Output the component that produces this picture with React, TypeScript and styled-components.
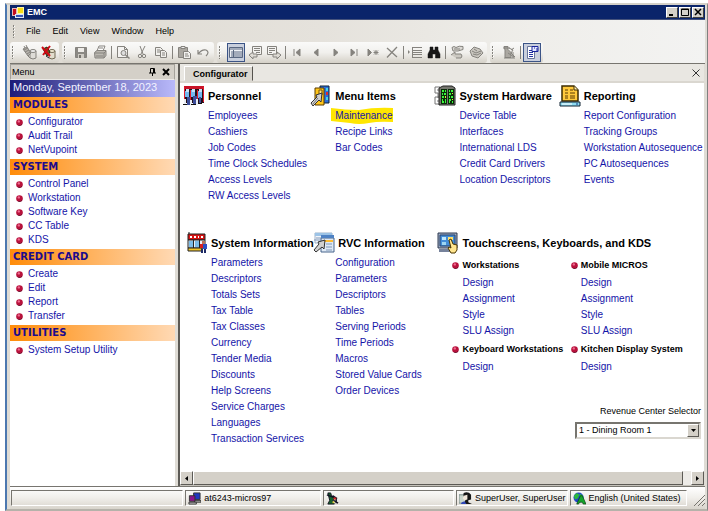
import React from "react";
import styled, { createGlobalStyle, css } from "styled-components";

const sans = `"Liberation Sans", Arial, sans-serif`;

const GlobalStyle = createGlobalStyle`
  * { box-sizing: border-box; }
  body { margin: 0; background: #fff; font-family: ${sans}; font-size: 9px; color: #000; }
  button, select { font: inherit; color: inherit; padding: 0; margin: 0; border: 0; background: none; }
  ul { list-style: none; margin: 0; padding: 0; }
  h1, h2, h3 { margin: 0; }
  svg { display: block; flex: none; }
`;

const Page = styled.div`
  height: 100vh;
  padding: 3px 0 0 5px;
  display: flex;
`;

const Window = styled.div`
  flex: 1;
  min-width: 0;
  display: flex;
  flex-direction: column;
  background: #dfdcd5;
  border-style: solid;
  border-width: 2px 1px 2px 2px;
  border-color: #d4d0c8 #808080 #b5b2aa #4c78b0;
  padding: 0 2px 0 3px;
`;

const TitleBar = styled.header`
  height: 15px;
  display: flex;
  align-items: center;
  gap: 3px;
  padding: 0 1px;
  background: #0a246a;
  border-bottom: 1px solid #46537c;
`;

const WindowTitle = styled.h1`
  flex: 1;
  font-size: 9px;
  line-height: 12px;
  color: #fff;
`;

const Caption = styled.div`
  display: flex;
  gap: 1px;
`;

const CaptionButton = styled.button`
  width: 12px;
  height: 11px;
  display: grid;
  place-items: center;
  background: #d4d0c8;
  border: 1px solid;
  border-color: #fff #404040 #404040 #fff;
`;

const MenuBar = styled.nav`
  height: 22px;
  display: flex;
  align-items: center;
  padding-left: 1px;
  background: linear-gradient(90deg, #dedad2, #e5e2dc 45%, #efeeea 75%, #f3f3f2);
`;

const MenuButton = styled.button`
  padding: 0 6px;
  line-height: 14px;
`;

const ToolBars = styled.div`
  height: 22px;
  display: flex;
  gap: 3px;
  background: linear-gradient(90deg, #dedad2, #e5e2dc 45%, #efeeea 75%, #f3f3f2);
  border-bottom: 1px solid #77756f;
`;

const Strip = styled.div`
  height: 21px;
  display: flex;
  align-items: center;
  gap: 1px;
  padding-right: 2px;
  border-radius: 3px;
  background: linear-gradient(#fafaf9, #f1f0ed 50%, #d5d1c8);
`;

const ToolButton = styled.button<{ $pressed?: boolean }>`
  width: 18px;
  height: 19px;
  display: grid;
  place-items: center;
  color: #85837e;
  ${(p) => p.$pressed && css`
    background: #c9cfdd;
    border: 1px solid #3b5486;
  `}
`;

const Divider = styled.span`
  width: 1px;
  height: 13px;
  margin: 0 1px;
  background: #85837e;
`;

const Workspace = styled.div`
  flex: 1;
  min-height: 0;
  display: grid;
  grid-template-columns: 165px minmax(0, 1fr);
  gap: 3px;
  padding-right: 1px;
`;

const SidePanel = styled.aside`
  display: flex;
  flex-direction: column;
  background: #fff;
`;

const PanelHeader = styled.div`
  height: 16px;
  display: flex;
  align-items: center;
  gap: 6px;
  padding: 0 4px 0 1px;
  background: #d4d0c8;
  border: 1px solid #a5a29b;
  border-bottom-color: #eceae6;
`;

const PanelTitle = styled.h2`
  flex: 1;
  font-size: 9px;
  font-weight: 400;
`;

const DateStrip = styled.div`
  height: 17px;
  padding-left: 3px;
  font-size: 11px;
  line-height: 14px;
  white-space: nowrap;
  color: #f2f2ff;
  background: linear-gradient(90deg, #1c1c78, #b9b9fa);
`;

const GroupTitle = styled.h3`
  height: 16px;
  padding-left: 3px;
  font: bold 10px/15px "DejaVu Sans", Verdana, sans-serif;
  color: #1c0a8c;
  background: linear-gradient(90deg, #ff8c0a, #ffd9b4);
`;

const GroupList = styled.ul`
  padding: 2px 0 2px 6px;
`;

const GroupItem = styled.li`
  height: 14px;
  display: flex;
  align-items: center;
  gap: 5px;
`;

const Link = styled.a`
  position: relative;
  font-size: 10px;
  line-height: 16px;
  white-space: nowrap;
  color: #1414a8;
  text-decoration: none;
`;

const Marker = styled.svg`
  position: absolute;
  left: -4px;
  top: -3px;
  z-index: -1;
`;

const MainPanel = styled.main`
  display: flex;
  flex-direction: column;
  border-left: 2px solid #5c5a55;
  background: #fff;
  isolation: isolate;
`;

const TabRow = styled.div`
  height: 19px;
  display: flex;
  align-items: flex-end;
  justify-content: space-between;
  padding: 0 4px;
  background: #e9e7e2;
  border-bottom: 2px solid #dad7d0;
`;

const Tab = styled.button`
  height: 15px;
  padding: 0 4px 0 8px;
  font-weight: 700;
  background: #dad7d0;
  border: 1px solid;
  border-color: #fff #55534e transparent #fff;
`;

const CloseButton = styled.button`
  height: 17px;
  display: grid;
  place-items: center;
`;

const Canvas = styled.div`
  flex: 1;
  min-height: 0;
  overflow: hidden;
  display: flex;
  flex-direction: column;
  gap: 27px;
  padding-top: 1px;
`;

const TopRow = styled.div`
  display: grid;
  grid-template-columns: 127fr 124fr 124fr 145fr;
  padding-left: 3px;
`;

const BottomRow = styled.div`
  display: grid;
  grid-template-columns: 124fr 127fr 266fr;
  padding-left: 6px;
`;

const Section = styled.section`
  min-width: 0;
`;

const SectionHead = styled.div<{ $inset?: boolean }>`
  height: 24px;
  display: grid;
  grid-template-columns: 22px 1fr;
  gap: 3px;
  align-items: center;
  padding-left: ${(p) => (p.$inset ? 3 : 0)}px;
`;

const SectionTitle = styled.h2`
  font-size: 11px;
  line-height: 22px;
  white-space: nowrap;
`;

const LinkList = styled.ul<{ $indent: number }>`
  padding-left: ${(p) => p.$indent}px;
`;

const LinkItem = styled.li`
  height: 16px;
  line-height: 16px;
  font-size: 10px;
`;

const SubGrid = styled.div`
  display: grid;
  grid-template-columns: 118fr 133fr;
  padding-left: 15px;
`;

const SubTitle = styled.h3`
  height: 20px;
  display: flex;
  align-items: center;
  gap: 3px;
  font-size: 9px;
  white-space: nowrap;
`;

const Selector = styled.label`
  display: flex;
  flex-direction: column;
  align-items: flex-end;
  gap: 4px;
  margin-top: 29px;
  padding-right: 3px;
  line-height: 14px;
`;

const SelectBox = styled.span`
  position: relative;
  width: 126px;
  height: 17px;
  border: 2px solid;
  border-color: #77756f #dad7d0 #dad7d0 #77756f;
`;

const Select = styled.select`
  appearance: none;
  display: block;
  width: 100%;
  height: 13px;
  padding-left: 2px;
  line-height: 13px;
  background: #fff;
`;

const SelectArrow = styled.span`
  position: absolute;
  top: 0;
  right: 0;
  width: 12px;
  height: 13px;
  display: grid;
  place-items: center;
  pointer-events: none;
  background: #d4d0c8;
  border: 1px solid;
  border-color: #fff #5c5a55 #5c5a55 #fff;
`;

const ScrollBar = styled.div`
  height: 15px;
  display: grid;
  grid-template-columns: 13px minmax(0, 1fr) 13px;
  background: #edebe7;
  border-bottom: 1px solid #c5c2ba;
`;

const ScrollButton = styled.button`
  display: grid;
  place-items: center;
  background: #d4d0c8;
  border: 1px solid;
  border-color: #fff #5c5a55 #5c5a55 #fff;
`;

const Thumb = styled.div`
  margin-right: 8px;
  background: #d4d0c8;
  border: 1px solid;
  border-color: #fff #5c5a55 #5c5a55 #fff;
`;

const StatusBar = styled.footer`
  height: 23px;
  display: grid;
  grid-template-columns: 173fr 136fr 132fr 112fr 118fr 16px;
  gap: 2px;
  padding: 3px 0 3px 1px;
  background: linear-gradient(#fff, #f0eeea 50%, #d8d4cc);
  border-top: 1px solid #77756f;
`;

const StatusCell = styled.div`
  min-width: 0;
  display: flex;
  align-items: center;
  gap: 3px;
  padding-left: 2px;
  white-space: nowrap;
  border: 1px solid;
  border-color: #77756f #fff #fff #77756f;
`;

const SizeGrip = styled.div`
  display: flex;
  align-items: flex-end;
  justify-content: flex-end;
`;

const Bullet = () => (
  <svg width="7" height="7" viewBox="0 0 7 7">
    <circle cx="3.5" cy="3.5" r="3.3" fill="#b8123c" />
    <path d="M1.5 5.6Q4 7.4 6.4 4.4 6 6.8 3.5 6.9 2 6.8 1.5 5.6Z" fill="#4c0420" />
    <circle cx="2.8" cy="2.4" r="1.2" fill="#f06a90" />
  </svg>
);

const Grip = () => (
  <svg width="9" height="15" viewBox="0 0 9 15" shapeRendering="crispEdges" fill="#85837e">
    <path d="M2 1h1v2H2zM2 4h1v2H2zM2 7h1v2H2zM2 10h1v2H2zM2 13h1v1H2z" />
    <path d="M3 2h1v1H3zM3 5h1v1H3zM3 8h1v1H3zM3 11h1v1H3z" fill="#fff" />
  </svg>
);

const toolShapes: Record<string, React.ReactNode> = {
  connect: (
    <>
      <path d="M8 6v7q3 2 6 0V6" fill="#dedcd7" />
      <ellipse cx="11" cy="6" rx="3" ry="1.5" fill="#eee" />
      <path d="M1 4l4-2 4 6-3 3zM3 3L2 1M5 2L4 0M6 11l2 2" fill="#b5b2ac" />
      <path d="M2 5l4-2M3 7l4-2M5 9l3-2" />
    </>
  ),
  disconnect: (
    <>
      <path d="M8 6v7q3 2 6 0V6" fill="#e2ddcd" stroke="#736b55" />
      <ellipse cx="11" cy="6" rx="3" ry="1.5" fill="#f0ead2" stroke="#736b55" />
      <path d="M2 4l4-2 3 5-3 4z" fill="#675a22" stroke="#2c2810" />
      <path d="M1 2l8 9M9 1L2 10" stroke="#cf0a16" strokeWidth="2" />
      <path d="M5 11l3 2" stroke="#223" />
    </>
  ),
  save: (
    <>
      <path d="M1.5 2.5h11v10h-11z" fill="#8b8984" />
      <path d="M4 3h6v4H4z" fill="#eeece8" stroke="none" />
      <path d="M4 9h6v4H4z" fill="#cfccc5" stroke="none" />
      <path d="M5 10h2v3H5z" fill="#77756f" stroke="none" />
    </>
  ),
  print: (
    <>
      <path d="M4 6l2-5h6l-2 5" fill="#fff" />
      <path d="M1.5 7.5L4 5.5h9v5l-2 2.5H2z" fill="#bbb8b1" />
      <path d="M2 8h9l2-2M3 11h7M11 8v5M6 3h4" />
    </>
  ),
  preview: (
    <>
      <path d="M1.5 1.5h7l3 3v8h-10z" fill="#f4f3f1" />
      <path d="M8.5 1.5v3h3" />
      <circle cx="7.5" cy="8" r="2.5" fill="#ddd" />
      <path d="M9.5 10l4 3.5" strokeWidth="1.5" />
    </>
  ),
  cut: (
    <>
      <path d="M5 1l3 8M10 1L6 9" />
      <circle cx="5" cy="11" r="1.7" />
      <circle cx="9" cy="11" r="1.7" />
    </>
  ),
  copy: (
    <>
      <path d="M1.5 2.5h5l2 2v6h-7z" fill="#f1f0ed" />
      <path d="M6.5 5.5h4l2 2v5h-6z" fill="#f1f0ed" />
      <path d="M3 5h3M3 7h3M8 8h3M8 10h3" />
    </>
  ),
  paste: (
    <>
      <path d="M1.5 2.5h9v10h-9z" fill="#aaa7a1" />
      <path d="M4 1.5h4v2H4z" fill="#eee" />
      <path d="M6.5 6.5h5l2 2v5h-7z" fill="#f1f0ed" />
      <path d="M8 9h3M8 11h4" />
    </>
  ),
  undo: <path d="M2 5v4h4M2 9q4-5 8-4 4 2 0 6" strokeWidth="1.2" />,
  details: (
    <>
      <path d="M.5 2.5h13v10H.5z" fill="#eef0f5" stroke="#596781" />
      <path d="M1 4h12M2 7h2M5 7h8M2 9h2M5 9h8M2 11h2M5 11h8M4.5 5v8" stroke="#596781" />
    </>
  ),
  prevTable: (
    <>
      <path d="M4.5 1.5h9v8h-9z" fill="#f4f3f1" />
      <path d="M6 3.5h6M6 5.5h6M8 7.5h4" />
      <path d="M1 10l4-3v2h4v3H5v2z" fill="#dedbd5" />
    </>
  ),
  nextTable: (
    <>
      <path d="M.5 1.5h9v8h-9z" fill="#f4f3f1" />
      <path d="M2 3.5h6M2 5.5h6M2 7.5h3" />
      <path d="M14 10l-4-3v2H6v3h4v2z" fill="#dedbd5" />
    </>
  ),
  first: <path d="M4 4v7M10 4v7L6 7.500z" fill="#85837e" />,
  prev: <path d="M9 4v7L5 7.500z" fill="#85837e" />,
  next: <path d="M6 4v7l4-3.500z" fill="#85837e" />,
  last: <path d="M10 4v7M4 4v7l4-3.500z" fill="#85837e" />,
  newRow: (
    <>
      <path d="M2 4v7l3.500-3.500z" fill="#85837e" />
      <path d="M10 5v5M7.500 7.500h5M8 5.500l4 4M12 5.500l-4 4" />
    </>
  ),
  remove: <path d="M2 3l10 9M12 2L2 12.500" strokeWidth="1.300" />,
  sheet: (
    <>
      <path d="M0 5v4l2-2z" fill="#85837e" stroke="none" />
      <path d="M4 2.500h10M4 5.500h10M4 7.500h10M4 9.500h10M4 12.500h10M4.500 2v11" />
    </>
  ),
  find: (
    <path
      d="M3 2h3v3h2V2h3v3l2 4v4H8.500V9h-3v4H1V9l2-4zM2.500 9v3M10 9v3"
      fill="#171717"
      stroke="#171717"
      strokeWidth=".5"
    />
  ),
  scroll: (
    <>
      <path d="M2 2.500q2-2 4 0 3-2 7-1v3L8 6H3z" fill="#dcdad5" />
      <path d="M1 10l4-3v2h6q2 2 0 4H6M4 4h6" fill="#cbc8c1" />
    </>
  ),
  refresh: (
    <>
      <path d="M1 6l4-4 6 2 3 4-5 5-6-2z" fill="#c9c6bf" />
      <path d="M3 6l4 2 5-2M5 4l3 2M4 9l4 1 4-2" />
    </>
  ),
  runner: (
    <>
      <path d="M2 1.500h4v3l3 3v5H3V5z" fill="#aaa7a1" />
      <path d="M7 3l4 2-2 3 4 4M1 3h7M6 8l6 4M11 7v6M2 13h11M9 5l3-2" />
    </>
  ),
  props: (
    <>
      <path d="M2.500 1.500h7v12h-7z" fill="#fff" stroke="#68759c" />
      <path d="M4 5.500h4M4 7.500h4M4 9.500h4M4 11.500h4" stroke="#2636a0" />
      <path d="M7 1.500h6v5H7z" fill="#e4e8ff" stroke="#18249c" />
      <path d="M9 3h1M12 3v4" stroke="#18249c" />
    </>
  ),
};

const ToolIcon = ({ name }: { name: string }) => (
  <svg width="15" height="15" viewBox="0 0 15 15" fill="none" stroke="currentColor" strokeWidth="1">
    {toolShapes[name]}
  </svg>
);

const sectionShapes: Record<string, React.ReactNode> = {
  people: (
    <>
      <path d="M1 1h20v17H1z" fill="#24101a" />
      <path d="M1 1h20v3H1z" fill="#c91428" />
      <path d="M1 2h1v16H1zM20 2h1v15h-1zM7 5h1v12H7zM14 5h1v12h-1z" fill="#e21b2c" />
      <path d="M2 6h4v6H2zM8 5h4v7H8zM15 6h4v7h-4z" fill="#74b8ef" />
      <path d="M3 4h3v3H3zM9 4h3v3H9zM16 4h3v3h-3z" fill="#c9e2f7" />
      <path d="M4 12h3v8H4zM10 11h4v8h-4zM16 12h2v7h-2z" fill="#3c4d9a" />
      <path d="M1 14h2v6H1zM7 15h2v5H7zM13 14h2v6h-2z" fill="#e9eef5" />
      <path d="M0 19h4v1H0zM8 19h5v1H8zM15 18h4v1h-4z" fill="#111" />
    </>
  ),
  menu: (
    <>
      <path d="M10 1h9v17h-9z" fill="#2b6fdc" stroke="#123" />
      <path d="M16 3h2v3h-2zM16 12h2v3h-2z" fill="#46d4e8" />
      <path d="M16 7h2v3h-2z" fill="#d63030" />
      <path d="M5 3h9v17H5z" fill="#ffc61a" stroke="#5a3b00" />
      <path d="M9 5h3v5H9z" fill="#ffe98a" stroke="#7a5200" />
      <path d="M12 8L6 10l1 2-6 6 2 3 6-6 2 2z" fill="#d0d0d0" stroke="#333" />
      <path d="M8 13l-5 6" stroke="#777" />
    </>
  ),
  hardware: (
    <>
      <path d="M1 2h5M1 2v6h3M4 8v5M1 12h4M1 12v7h5M3 5h4M3 16h4" fill="none" stroke="#777" />
      <path d="M5 3l4-2h9l3 2v17H5z" fill="#76766f" stroke="#222" />
      <path d="M7 4h6v15H7zM14 4h6v15h-6z" fill="#082b08" />
      <path
        d="M8 6h2M11 6h1M8 9h1M10 9h2M8 12h2M8 15h1M11 15h1M8 17h2M11 17h1M15 6h1M17 6h2M15 9h2M15 12h1M17 12h2M15 15h2M15 17h1M18 17h1"
        stroke="#3cf53c"
        strokeWidth="2"
      />
      <path d="M11 11h1v2h-1zM18 8h1v1h-1zM18 14h1v1h-1z" fill="#e9e334" />
    </>
  ),
  report: (
    <>
      <path d="M3 1h12l4 4v11H3z" fill="#ffc93c" stroke="#3c2b00" strokeWidth="1.5" />
      <path d="M15 1v4h4" fill="#fff0b0" stroke="#3c2b00" />
      <path d="M6 5h3M11 5h3M6 8h3M11 8h5M6 11h3M11 11h5M6 13h3M11 13h5" stroke="#5b3b00" />
      <path d="M1 17h20v4H1z" fill="#8edcf2" stroke="#123" />
      <path d="M3 19h10" stroke="#fff" />
      <path d="M17 19h2" stroke="#173a8a" />
    </>
  ),
  shop: (
    <>
      <path d="M3 0v2" stroke="#222" />
      <path d="M2 2h17v6H2z" fill="#d81414" stroke="#222" />
      <path d="M4 4h2v2H4zM8 4h2v2H8zM12 4h1v2h-1zM15 4h2v2h-2z" fill="#fff" />
      <path d="M2 8h17v8H2z" fill="#eaf3fb" stroke="#222" />
      <path d="M3 9h4v6H3zM9 9h4v6H9z" fill="#7cbce8" />
      <path d="M7 8h1v8H7zM13 8h1v8h-1z" fill="#222" />
      <path d="M2 16h14v3H2z" fill="#f2c62a" stroke="#222" />
      <path d="M16 9h3v3h-3z" fill="#b8735a" />
      <path d="M14 12h3v4h-3z" fill="#d82020" />
      <path d="M17 12h4v5h-4z" fill="#2c50c4" />
      <path d="M15 17h2v4h-2zM18 17h2v4h-2z" fill="#1d2b66" />
    </>
  ),
  form: (
    <>
      <path d="M2 1h17v10H2z" fill="#f2f5fa" stroke="#9fb2c8" />
      <path d="M2 1h17v3H2z" fill="#9cc3e6" />
      <path d="M8 6h13v14H8z" fill="#dfe9f5" stroke="#47658c" />
      <path d="M8 3h13v3H8z" fill="#4f82c4" />
      <path d="M3 6h5M1 8h7M13 12h6M13 15h6M13 18h6" stroke="#7e97b8" />
      <path d="M10 8h10v2H10z" fill="#ffbc30" />
      <path d="M12 8L5 10l1 2-5 6 2 2 6-5 2 2z" fill="#d0d0d0" stroke="#333" />
    </>
  ),
  touch: (
    <>
      <path d="M1 1h19v15H1z" fill="#9ba8bf" stroke="#2f3a52" />
      <path d="M3 3h15v11H3z" fill="#438dd8" stroke="#26456e" />
      <path d="M5 5h4v3H5z" fill="#bfe8fb" />
      <path d="M11 5h5v3h-5z" fill="#ffe069" />
      <path d="M5 10h4v3H5z" fill="#9ed6f2" />
      <path d="M2 17h14v3H2z" fill="#76829b" />
      <path d="M12 8l2-1 2 5 4 1v5l-2 3h-4l-3-5 1-1 2 1z" fill="#ffe58e" stroke="#4b3500" />
    </>
  ),
};

const SectionIcon = ({ name }: { name: string }) => (
  <svg width="22" height="22" viewBox="0 0 22 22" aria-hidden="true">
    {sectionShapes[name]}
  </svg>
);

const AppIcon = () => (
  <svg width="13" height="12" viewBox="0 0 13 12" shapeRendering="crispEdges">
    <path d="M1 2h4v7H1z" fill="#c40d20" stroke="#e4b9b9" />
    <path d="M6 1h6v6H6z" fill="#f8dc16" stroke="#fff6a6" />
    <path d="M4 8h8v3H4z" fill="#3456bc" stroke="#dbe3f5" />
  </svg>
);

const StatusIcon = ({ kind }: { kind: "server" | "runner" | "user" | "globe" }) => (
  <svg width="13" height="13" viewBox="0 0 14 14">
    {kind === "server" && (
      <>
        <path d="M6 1h7v7H6z" fill="#2038c0" stroke="#333" />
        <path d="M7 9h7v2H7z" fill="#aaa" stroke="#333" />
        <path d="M1.500 4h6v6h-6z" fill="#8c148c" stroke="#333" />
        <path d="M1 11h8v2H1z" fill="#ccc" stroke="#333" />
      </>
    )}
    {kind === "runner" && (
      <>
        <path d="M2 1h3l1 3 3 3-2 3 2 3H2l2-4z" fill="#17632c" stroke="#112" />
        <path d="M1 3l8 3M7 4l5 3M8 9l5 3M11 7v5" stroke="#112" strokeWidth="1.500" />
        <path d="M8 6h3v2H8z" fill="#d42525" />
        <path d="M7 10h2v2H7z" fill="#d6ca35" />
      </>
    )}
    {kind === "user" && (
      <>
        <path d="M0 3h7v9H0z" fill="#c9d5cb" stroke="#788" />
        <path d="M5 1q5-2 8 2v5l-3 1v2l4 2H5l2-4q-3-3-2-8z" fill="#171717" />
        <path d="M5 4l4-1v5l-3 1-2-2z" fill="#f3e9dc" />
        <path d="M3 11l3-1 2 3H2z" fill="#3048b8" />
      </>
    )}
    {kind === "globe" && (
      <>
        <circle cx="6" cy="6" r="5.500" fill="#2348c8" />
        <path d="M1 4l3-3 3 2-2 4-3 1zM7 2l4 2v3L8 6z" fill="#2cba3c" />
        <path d="M4 13l4-9h2l4 9h-3l-1-2H7l-1 2z" fill="#16a42c" stroke="#063b0b" strokeWidth=".7" />
      </>
    )}
  </svg>
);

const Arrow = ({ d }: { d: string }) => (
  <svg width="7" height="7" viewBox="0 0 7 7"><path d={d} /></svg>
);

const menus = ["File", "Edit", "View", "Window", "Help"];

const strips: string[][] = [
  ["connect", "disconnect"],
  ["save", "print", "|", "preview", "cut", "copy", "|", "paste", "undo"],
  ["details", "prevTable", "nextTable", "|", "first", "prev", "next", "last", "newRow", "remove", "|", "sheet", "find", "|", "scroll", "refresh"],
  ["runner", "|", "props"],
];
const pressed = ["details", "props"];

const groups = [
  { title: "MODULES", items: ["Configurator", "Audit Trail", "NetVupoint"] },
  { title: "SYSTEM", items: ["Control Panel", "Workstation", "Software Key", "CC Table", "KDS"] },
  { title: "CREDIT CARD", items: ["Create", "Edit", "Report", "Transfer"] },
  { title: "UTILITIES", items: ["System Setup Utility"] },
];

type SectionData = { title: string; icon: string; items: string[]; inset?: boolean };

const topSections: SectionData[] = [
  { title: "Personnel", icon: "people", items: ["Employees", "Cashiers", "Job Codes", "Time Clock Schedules", "Access Levels", "RW Access Levels"] },
  { title: "Menu Items", icon: "menu", items: ["Maintenance", "Recipe Links", "Bar Codes"] },
  { title: "System Hardware", icon: "hardware", items: ["Device Table", "Interfaces", "International LDS", "Credit Card Drivers", "Location Descriptors"] },
  { title: "Reporting", icon: "report", items: ["Report Configuration", "Tracking Groups", "Workstation Autosequence", "PC Autosequences", "Events"] },
];

const bottomSections: SectionData[] = [
  { title: "System Information", icon: "shop", items: ["Parameters", "Descriptors", "Totals Sets", "Tax Table", "Tax Classes", "Currency", "Tender Media", "Discounts", "Help Screens", "Service Charges", "Languages", "Transaction Services"] },
  { title: "RVC Information", icon: "form", inset: true, items: ["Configuration", "Parameters", "Descriptors", "Tables", "Serving Periods", "Time Periods", "Macros", "Stored Value Cards", "Order Devices"] },
];

const deviceGroups = [
  { title: "Workstations", items: ["Design", "Assignment", "Style", "SLU Assign"] },
  { title: "Mobile MICROS", items: ["Design", "Assignment", "Style", "SLU Assign"] },
  { title: "Keyboard Workstations", items: ["Design"] },
  { title: "Kitchen Display System", items: ["Design"] },
];

const Links = ({ items, indent }: { items: string[]; indent: number }) => (
  <LinkList $indent={indent}>
    {items.map((item) => (
      <LinkItem key={item}>
        <Link href="#">
          {item === "Maintenance" && (
            <Marker width="62" height="17" viewBox="0 0 62 17">
              <path d="M0 1Q14 3 28 3 44 0 62 1V15Q48 14 38 16 28 18 19 16L0 14Z" fill="#ffe600" />
            </Marker>
          )}
          {item}
        </Link>
      </LinkItem>
    ))}
  </LinkList>
);

const LinkSection = ({ title, icon, items, inset }: SectionData) => (
  <Section>
    <SectionHead $inset={inset}>
      <SectionIcon name={icon} />
      <SectionTitle>{title}</SectionTitle>
    </SectionHead>
    <Links items={items} indent={25} />
  </Section>
);

export default function App() {
  return (
    <Page>
      <GlobalStyle />
      <Window>
        <TitleBar>
          <AppIcon />
          <WindowTitle>EMC</WindowTitle>
          <Caption>
            <CaptionButton aria-label="Minimize">
              <svg width="8" height="8" viewBox="0 0 8 8"><path d="M1 6h4v2H1z" /></svg>
            </CaptionButton>
            <CaptionButton aria-label="Maximize">
              <svg width="8" height="8" viewBox="0 0 8 8"><path d="M.5 1h7v6.500h-7zM0 1.500h8" fill="none" stroke="#000" /></svg>
            </CaptionButton>
            <CaptionButton aria-label="Close">
              <svg width="8" height="8" viewBox="0 0 8 8"><path d="M1 1l6 6M7 1L1 7" stroke="#000" strokeWidth="1.500" /></svg>
            </CaptionButton>
          </Caption>
        </TitleBar>

        <MenuBar>
          <Grip />
          {menus.map((m) => (
            <MenuButton key={m}>{m}</MenuButton>
          ))}
        </MenuBar>

        <ToolBars>
          {strips.map((strip, i) => (
            <Strip key={i} role="toolbar">
              <Grip />
              {strip.map((name, j) =>
                name === "|" ? (
                  <Divider key={j} />
                ) : (
                  <ToolButton key={j} aria-label={name} $pressed={pressed.includes(name)}>
                    <ToolIcon name={name} />
                  </ToolButton>
                )
              )}
            </Strip>
          ))}
        </ToolBars>

        <Workspace>
          <SidePanel>
            <PanelHeader>
              <PanelTitle>Menu</PanelTitle>
              <button aria-label="Pin">
                <svg width="7" height="8" viewBox="0 0 7 8"><path d="M1.500 5V.5h4V5M0 5h7M3.500 5v3M4.500 1v4" fill="none" stroke="#000" /></svg>
              </button>
              <button aria-label="Close panel">
                <svg width="8" height="8" viewBox="0 0 8 8"><path d="M1 1l6 6M7 1L1 7" stroke="#000" strokeWidth="2" /></svg>
              </button>
            </PanelHeader>
            <DateStrip>Monday, September 18, 2023</DateStrip>
            {groups.map((g) => (
              <section key={g.title}>
                <GroupTitle>{g.title}</GroupTitle>
                <GroupList>
                  {g.items.map((item) => (
                    <GroupItem key={item}>
                      <Bullet />
                      <Link href="#">{item}</Link>
                    </GroupItem>
                  ))}
                </GroupList>
              </section>
            ))}
          </SidePanel>

          <MainPanel>
            <TabRow>
              <Tab>Configurator</Tab>
              <CloseButton aria-label="Close tab">
                <svg width="8" height="8" viewBox="0 0 8 8"><path d="M.5.5l7 7M7.500.5l-7 7" stroke="#333" /></svg>
              </CloseButton>
            </TabRow>
            <Canvas>
              <TopRow>
                {topSections.map((s) => (
                  <LinkSection key={s.title} {...s} />
                ))}
              </TopRow>
              <BottomRow>
                {bottomSections.map((s) => (
                  <LinkSection key={s.title} {...s} />
                ))}
                <Section>
                  <SectionHead>
                    <SectionIcon name="touch" />
                    <SectionTitle>Touchscreens, Keyboards, and KDS</SectionTitle>
                  </SectionHead>
                  <SubGrid>
                    {deviceGroups.map((g) => (
                      <div key={g.title}>
                        <SubTitle><Bullet />{g.title}</SubTitle>
                        <Links items={g.items} indent={10} />
                      </div>
                    ))}
                  </SubGrid>
                  <Selector>
                    Revenue Center Selector
                    <SelectBox>
                      <Select defaultValue="1">
                        <option value="1">1 - Dining Room 1</option>
                      </Select>
                      <SelectArrow><Arrow d="M1 2h5L3.500 5z" /></SelectArrow>
                    </SelectBox>
                  </Selector>
                </Section>
              </BottomRow>
            </Canvas>
            <ScrollBar>
              <ScrollButton aria-label="Scroll left"><Arrow d="M5 1v5L2 3.500z" /></ScrollButton>
              <Thumb />
              <ScrollButton aria-label="Scroll right"><Arrow d="M2 1v5l3-2.500z" /></ScrollButton>
            </ScrollBar>
          </MainPanel>
        </Workspace>

        <StatusBar>
          <StatusCell />
          <StatusCell><StatusIcon kind="server" />at6243-micros97</StatusCell>
          <StatusCell><StatusIcon kind="runner" /></StatusCell>
          <StatusCell><StatusIcon kind="user" />SuperUser, SuperUser</StatusCell>
          <StatusCell><StatusIcon kind="globe" />English (United States)</StatusCell>
          <SizeGrip>
            <svg width="12" height="12" viewBox="0 0 12 12"><path d="M1 12L12 1M5 12l7-7M9 12l3-3" stroke="#77756f" /></svg>
          </SizeGrip>
        </StatusBar>
      </Window>
    </Page>
  );
}
